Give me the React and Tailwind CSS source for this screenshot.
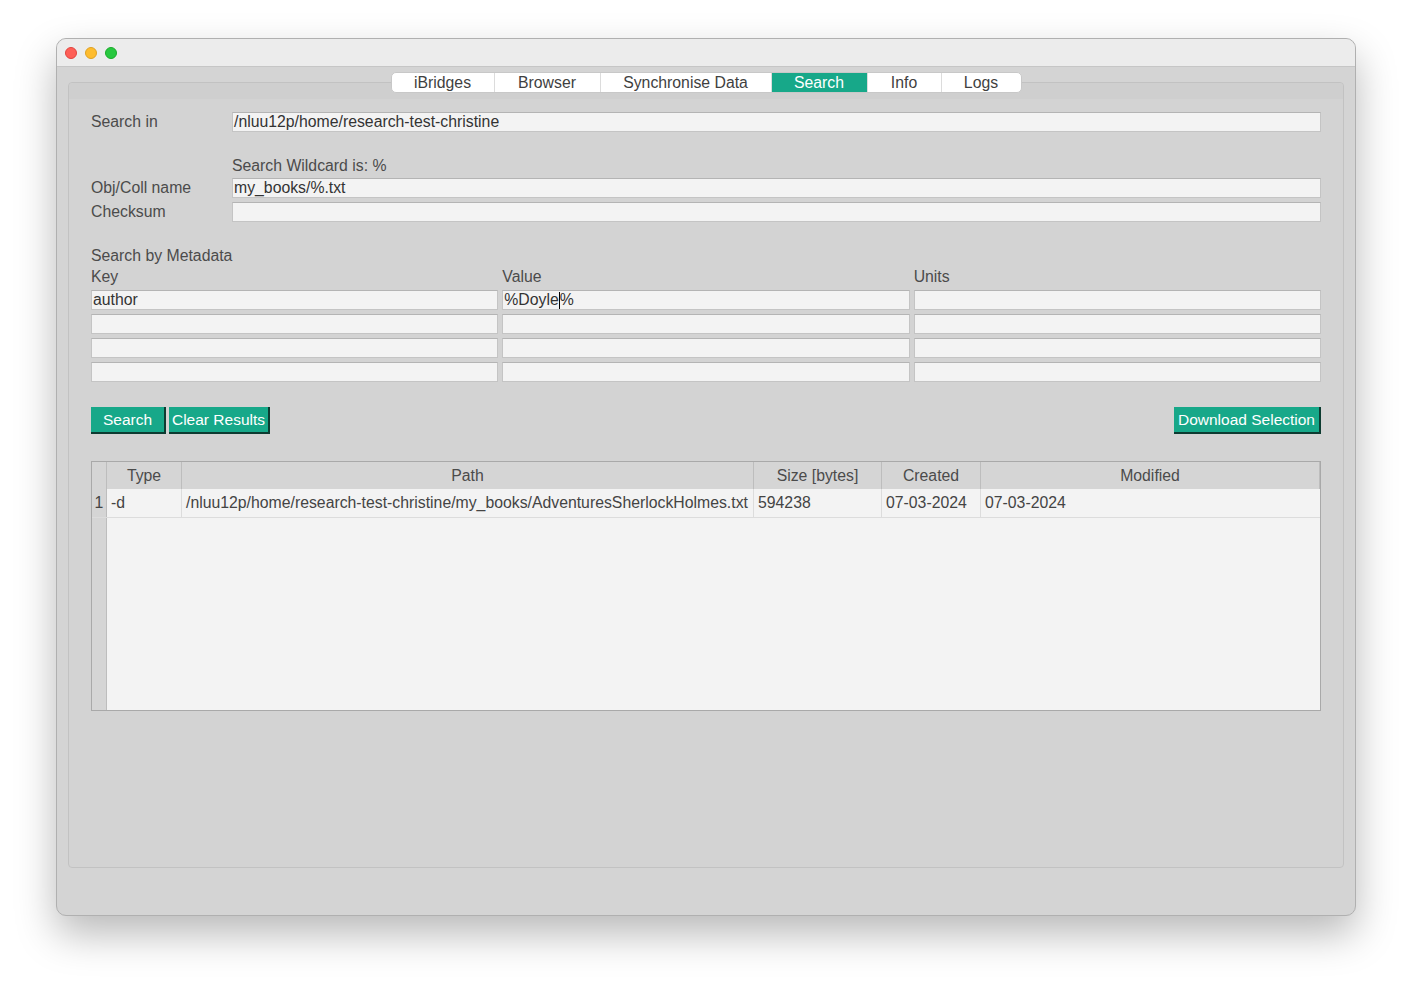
import React from "react";

const tabs = ["iBridges", "Browser", "Synchronise Data", "Search", "Info", "Logs"];
const tabWidths = ["w-[102px]", "w-[106px]", "w-[171px]", "w-[96px]", "w-[74px]", "w-[80px]"];

function Field({ value = "", caret }) {
  return (
    <div className="h-[20px] flex items-center bg-[#f3f3f3] border border-[#c4c4c4] border-t-[#b4b4b4] px-[1px] text-[#333] text-[15.8px] leading-none whitespace-nowrap overflow-hidden">
      {value}
      {caret && (
        <>
          <span className="inline-block w-px h-[17px] bg-black" />
          {caret}
        </>
      )}
    </div>
  );
}

function Btn({ children, className = "" }) {
  return (
    <button
      className={
        "h-[27px] bg-[#17a889] text-white text-[15.5px] leading-none border-r-2 border-b-2 border-[#0d3b31] " +
        className
      }
    >
      {children}
    </button>
  );
}

export default function App() {
  const headers = ["Type", "Path", "Size [bytes]", "Created", "Modified"];
  const row = ["-d", "/nluu12p/home/research-test-christine/my_books/AdventuresSherlockHolmes.txt", "594238", "07-03-2024", "07-03-2024"];

  return (
    <div
      className="w-[1412px] h-[990px] bg-white pt-[38px] pl-[56px]"
      style={{ fontFamily: '"Liberation Sans", Arial, sans-serif' }}
    >
      <div className="w-[1300px] h-[878px] rounded-[10px] bg-[#d4d4d4] border border-[#b0b0b0] shadow-[0_18px_40px_rgba(0,0,0,0.28)] overflow-hidden flex flex-col">
        {/* title bar */}
        <div className="h-[28px] bg-[#ececec] border-b border-[#c6c6c6] flex items-center gap-[8px] pl-[8px] shrink-0">
          <span className="w-[12px] h-[12px] rounded-full bg-[#fe5f57] border border-[#e0443e]" />
          <span className="w-[12px] h-[12px] rounded-full bg-[#febc2e] border border-[#dea123]" />
          <span className="w-[12px] h-[12px] rounded-full bg-[#28c840] border border-[#1aab29]" />
        </div>

        {/* body */}
        <div className="flex-1 px-[11px] pt-[5px] pb-[47px] flex flex-col">
          {/* tab bar */}
          <div className="relative z-10 flex justify-center">
            <div className="flex h-[21px] bg-white rounded-[5px] border border-[#c8c8c8] overflow-hidden">
              {tabs.map((t, i) => (
                <div
                  key={t}
                  className={
                    tabWidths[i] +
                    " flex items-center justify-center text-[15.8px] leading-none " +
                    (t === "Search" ? "bg-[#17a889] text-white" : "text-[#3f3f3f]") +
                    (i > 0 ? " border-l border-[#dcdcdc]" : "")
                  }
                >
                  {t}
                </div>
              ))}
            </div>
          </div>

          {/* pane */}
          <div className="-mt-[11px] flex-1 rounded-[4px] border border-[#c2c2c2] bg-[#d3d3d3] flex flex-col">
            <div className="h-[16px] bg-[#cfcfcf] rounded-t-[4px]" />
            <div className="px-[22px] pt-[13px] text-[#4b4b4b] text-[15.8px] leading-none">
              {/* search in */}
              <div className="grid grid-cols-[141px_1fr] items-center">
                <span>Search in</span>
                <Field value="/nluu12p/home/research-test-christine" />
              </div>

              <div className="mt-[26px] pl-[141px] h-[16px] flex items-center">Search Wildcard is: %</div>

              <div className="mt-[4px] grid grid-cols-[141px_1fr] items-center">
                <span>Obj/Coll name</span>
                <Field value="my_books/%.txt" />
              </div>
              <div className="mt-[4px] grid grid-cols-[141px_1fr] items-center">
                <span>Checksum</span>
                <Field />
              </div>

              {/* metadata */}
              <div className="mt-[26px] h-[16px] flex items-center">Search by Metadata</div>
              <div className="mt-[5px] grid grid-cols-3 gap-x-[4px]">
                <span className="h-[16px] flex items-center">Key</span>
                <span className="h-[16px] flex items-center">Value</span>
                <span className="h-[16px] flex items-center">Units</span>
              </div>
              <div className="mt-[5px] grid grid-cols-3 gap-x-[4px] gap-y-[4px]">
                <Field value="author" />
                <Field value="%Doyle" caret="%" />
                <Field />
                <Field />
                <Field />
                <Field />
                <Field />
                <Field />
                <Field />
                <Field />
                <Field />
                <Field />
              </div>

              {/* buttons */}
              <div className="mt-[25px] flex items-center">
                <Btn className="w-[75px]">Search</Btn>
                <Btn className="ml-[3px] w-[101px]">Clear Results</Btn>
                <Btn className="ml-auto w-[147px]">Download Selection</Btn>
              </div>

              {/* results table */}
              <div className="mt-[27px] h-[250px] border border-[#a9a9a9] bg-[#f3f3f3] flex flex-col text-[#444]">
                <div className="grid grid-cols-[15px_75px_572px_128px_99px_1fr] h-[27px] bg-[#d5d5d5] text-[#4b4b4b]">
                  <div className="border-r border-[#bdbdbd]" />
                  {headers.map((h) => (
                    <div key={h} className="flex items-center justify-center border-r border-[#bdbdbd]">
                      {h}
                    </div>
                  ))}
                </div>
                <div className="grid grid-cols-[15px_75px_572px_128px_99px_1fr] h-[29px] border-b border-[#dcdcdc]">
                  <div className="bg-[#d5d5d5] border-r border-[#bdbdbd] flex items-center justify-center">1</div>
                  {row.map((c, i) => (
                    <div
                      key={i}
                      className={
                        "flex items-center pl-[4px] whitespace-nowrap overflow-hidden" +
                        (i < row.length - 1 ? " border-r border-[#dcdcdc]" : "")
                      }
                    >
                      {c}
                    </div>
                  ))}
                </div>
                <div className="flex-1 flex">
                  <div className="w-[15px] bg-[#d5d5d5] border-r border-[#bdbdbd]" />
                  <div className="flex-1" />
                </div>
              </div>
            </div>
          </div>
        </div>
      </div>
    </div>
  );
}
